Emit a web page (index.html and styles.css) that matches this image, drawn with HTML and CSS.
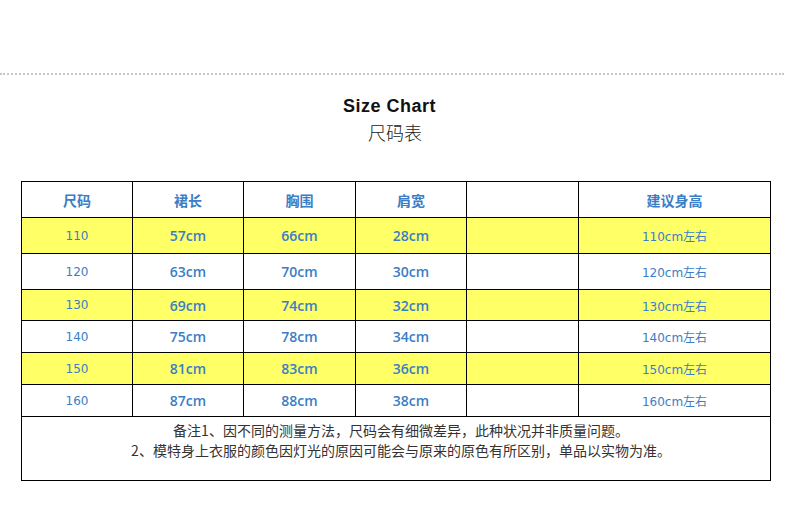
FILE: index.html
```html
<!DOCTYPE html>
<html lang="zh">
<head>
<meta charset="utf-8">
<title>Size Chart</title>
<link rel="stylesheet" href="styles.css">
</head>
<body>
<div class="divider"></div>
<h1 class="title">Size Chart</h1>
<div class="subtitle">尺码表</div>
<table class="chart">
  <colgroup>
    <col class="c1"><col class="c2"><col class="c3"><col class="c4"><col class="c5"><col class="c6">
  </colgroup>
  <tr class="head"><th>尺码</th><th>裙长</th><th>胸围</th><th>肩宽</th><th></th><th>建议身高</th></tr>
  <tr class="yellow r36"><td class="n">110</td><td class="m">57cm</td><td class="m">66cm</td><td class="m">28cm</td><td></td><td class="n">110cm左右</td></tr>
  <tr class="r36"><td class="n">120</td><td class="m">63cm</td><td class="m">70cm</td><td class="m">30cm</td><td></td><td class="n">120cm左右</td></tr>
  <tr class="yellow r31"><td class="n">130</td><td class="m">69cm</td><td class="m">74cm</td><td class="m">32cm</td><td></td><td class="n">130cm左右</td></tr>
  <tr class="r32"><td class="n">140</td><td class="m">75cm</td><td class="m">78cm</td><td class="m">34cm</td><td></td><td class="n">140cm左右</td></tr>
  <tr class="yellow r32"><td class="n">150</td><td class="m">81cm</td><td class="m">83cm</td><td class="m">36cm</td><td></td><td class="n">150cm左右</td></tr>
  <tr class="r32"><td class="n">160</td><td class="m">87cm</td><td class="m">88cm</td><td class="m">38cm</td><td></td><td class="n">160cm左右</td></tr>
  <tr class="notes"><td colspan="6">备注1、因不同的测量方法，尺码会有细微差异，此种状况并非质量问题。<br>2、模特身上衣服的颜色因灯光的原因可能会与原来的原色有所区别，单品以实物为准。</td></tr>
</table>
</body>
</html>
```
FILE: styles.css
```css
html, body {
  margin: 0;
  padding: 0;
  background: #fff;
}
body {
  width: 790px;
  font-family: "DejaVu Sans", "Noto Sans CJK SC", sans-serif;
}
.divider {
  margin-top: 73px;
  width: 784px;
  border-top: 2px dotted #c8c8c8;
}
.title {
  margin: 21px 0 0 0;
  text-align: center;
  font-family: "Liberation Sans", "Noto Sans CJK SC", sans-serif;
  font-weight: bold;
  font-size: 18px;
  letter-spacing: 0.5px;
  line-height: 20px;
  color: #111;
  padding-right: 11px;
}
.subtitle {
  margin-top: 5px;
  text-align: center;
  font-family: "Noto Sans CJK SC", sans-serif;
  font-weight: 300;
  font-size: 18px;
  line-height: 22px;
  color: #222;
}
.chart {
  margin: 38px 0 0 21px;
  width: 749px;
  border-collapse: collapse;
  table-layout: fixed;
}
.c1 { width: 111px; }
.c2 { width: 111px; }
.c3 { width: 112px; }
.c4 { width: 111px; }
.c5 { width: 112px; }
.c6 { width: 192px; }
.chart th, .chart td {
  border: 1px solid #000;
  padding: 0;
  text-align: center;
  vertical-align: middle;
  color: #3a7ec6;
}
.chart th {
  height: 35px;
  font-family: "Noto Sans CJK SC", sans-serif;
  font-weight: bold;
  font-size: 14px;
}
.yellow td {
  background: #ffff66;
}
.r36 td { height: 35px; }
.r31 td { height: 30px; }
.r32 td { height: 31px; }
.n {
  font-family: "DejaVu Sans", "Noto Sans CJK SC", sans-serif;
  font-size: 12px;
  padding-top: 2px;
}
.m {
  font-family: "Open Sans", sans-serif;
  font-weight: 600;
  font-size: 14px;
  padding-bottom: 2px;
}
.notes td {
  height: 60px;
  vertical-align: top;
  padding: 3px 0 0 10px;
  color: #333;
  font-family: "Noto Sans CJK SC", sans-serif;
  font-size: 14px;
  line-height: 20px;
}
```
